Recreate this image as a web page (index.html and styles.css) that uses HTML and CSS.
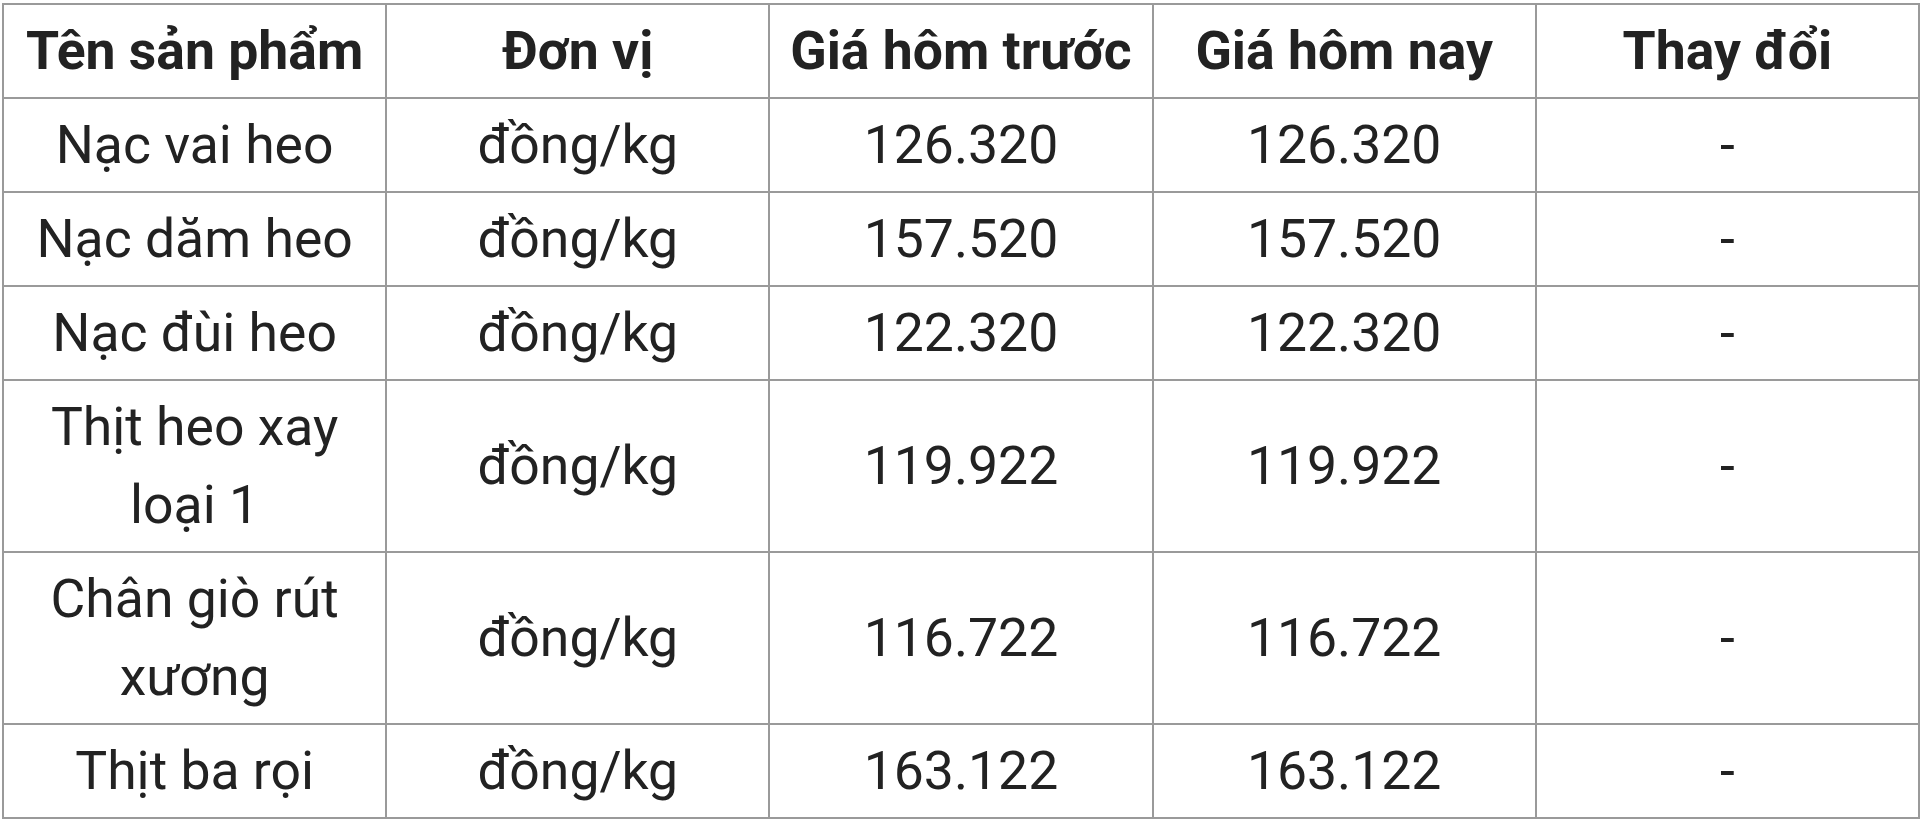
FILE: index.html
```html
<!DOCTYPE html>
<html lang="vi">
<head>
<meta charset="utf-8">
<title>Giá thịt heo</title>
<link rel="stylesheet" href="styles.css">
</head>
<body>
<table class="price-table">
  <colgroup>
    <col class="col"><col class="col"><col class="col"><col class="col"><col class="col">
  </colgroup>
  <thead>
    <tr>
      <th>Tên sản phẩm</th>
      <th>Đơn vị</th>
      <th>Giá hôm trước</th>
      <th>Giá hôm nay</th>
      <th>Thay đổi</th>
    </tr>
  </thead>
  <tbody>
    <tr><td>Nạc vai heo</td><td>đồng/kg</td><td>126.320</td><td>126.320</td><td>-</td></tr>
    <tr><td>Nạc dăm heo</td><td>đồng/kg</td><td>157.520</td><td>157.520</td><td>-</td></tr>
    <tr><td>Nạc đùi heo</td><td>đồng/kg</td><td>122.320</td><td>122.320</td><td>-</td></tr>
    <tr><td>Thịt heo xay loại 1</td><td>đồng/kg</td><td>119.922</td><td>119.922</td><td>-</td></tr>
    <tr><td>Chân giò rút xương</td><td>đồng/kg</td><td>116.722</td><td>116.722</td><td>-</td></tr>
    <tr><td>Thịt ba rọi</td><td>đồng/kg</td><td>163.122</td><td>163.122</td><td>-</td></tr>
  </tbody>
</table>
</body>
</html>
```
FILE: styles.css
```css
html, body {
  margin: 0;
  padding: 0;
  background: #ffffff;
}

body {
  padding: 3px 0 0 2px;
  font-family: Roboto, "Liberation Sans", Arial, sans-serif;
  color: #222222;
}

.price-table {
  width: 1918px;
  table-layout: fixed;
  border-collapse: collapse;
  font-size: 53.5px;
  line-height: 78px;
}

.price-table .col {
  width: 20%;
}

.price-table th,
.price-table td {
  border: 2px solid #9a9a9a;
  padding: 7px 8px;
  text-align: center;
  vertical-align: middle;
}

.price-table th {
  font-weight: 700;
}

.price-table td {
  font-weight: 400;
}
```
